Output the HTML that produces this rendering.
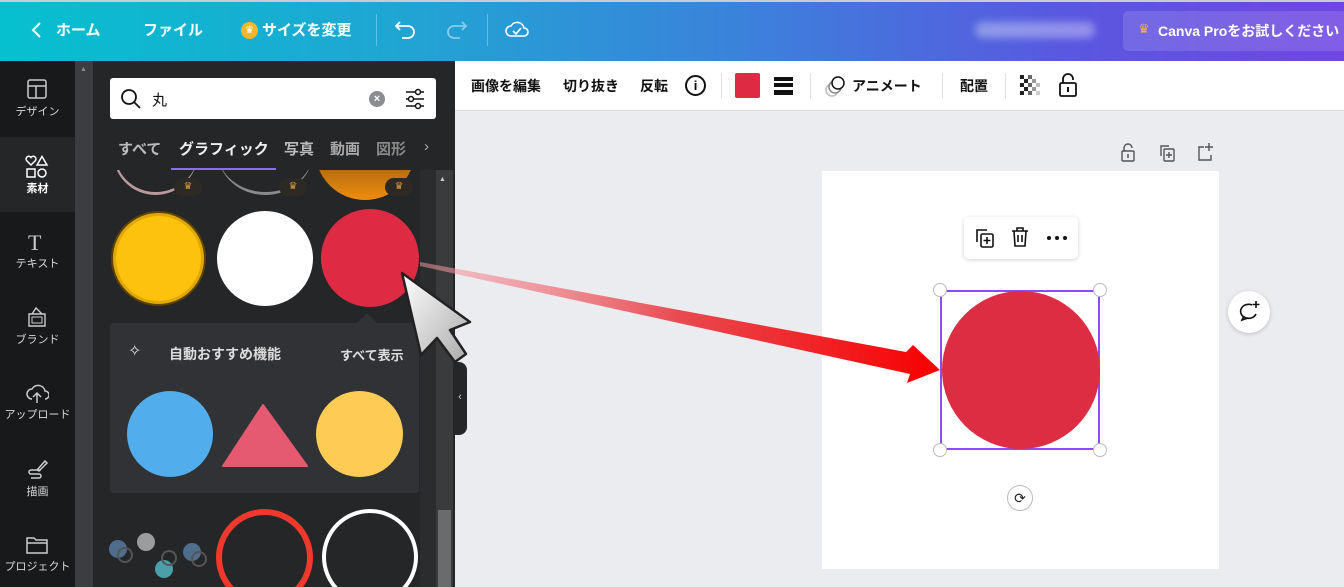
<!DOCTYPE html>
<html><head><meta charset="utf-8"><style>
*{margin:0;padding:0;box-sizing:border-box}
body{width:1344px;height:587px;overflow:hidden;position:relative;font-family:"Liberation Sans","Noto Sans CJK JP",sans-serif;background:#ebecf0}
.abs{position:absolute}
.top{left:0;top:0;width:1344px;height:61px;background:linear-gradient(90deg,#06c0cf 0%,#20a5d3 30%,#3b82db 55%,#5a57e0 80%,#7046e2 100%);border-top:2px solid #c9cdd3}
.tw{color:#fff;font-weight:bold;font-size:15px;top:19px}
.rail{left:0;top:61px;width:75px;height:526px;background:#18191b}
.ri{left:0;width:75px;text-align:center;color:#d8d9db;font-size:11px}
.sb{left:75px;top:61px;width:18px;height:526px;background:#3c3d40}
.panel{left:93px;top:61px;width:362px;height:526px;background:#252627}
.tool{left:455px;top:61px;width:889px;height:50px;background:#fff;border-bottom:1px solid #e0e0e0}
.tt{top:76px;font-size:14px;font-weight:bold;color:#111}
.sep{width:1px;height:26px;top:73px;background:#e0e1e3}
.cb{width:28px;height:18px;border-radius:9px;background:#2d2a26;color:#d99b3c;font-size:10px;text-align:center;line-height:18px}
</style></head><body>
<div class="abs top"></div>
<svg class="abs" style="left:30px;top:21px" width="14" height="18"><path d="M10 2 L3 9 L10 16" stroke="#fff" stroke-width="2" fill="none"/></svg>
<div class="abs tw" style="left:56px">ホーム</div>
<div class="abs tw" style="left:143px">ファイル</div>
<div class="abs" style="left:241px;top:22px;width:17px;height:17px;border-radius:50%;background:#f5b72a;color:#fff;font-size:10px;text-align:center;line-height:17px">♛</div>
<div class="abs tw" style="left:262px">サイズを変更</div>
<div class="abs" style="left:376px;top:14px;width:1px;height:32px;background:rgba(255,255,255,.3)"></div>
<svg class="abs" style="left:394px;top:18px" width="24" height="22"><path d="M6 4 L2 8 L6 12 M2 8 H14 a6 6 0 0 1 0 12 H8" stroke="#fff" stroke-width="1.8" fill="none"/></svg>
<svg class="abs" style="left:444px;top:18px" width="24" height="22"><path d="M18 4 L22 8 L18 12 M22 8 H10 a6 6 0 0 0 0 12 H16" stroke="rgba(255,255,255,.45)" stroke-width="1.8" fill="none"/></svg>
<div class="abs" style="left:487px;top:14px;width:1px;height:32px;background:rgba(255,255,255,.3)"></div>
<svg class="abs" style="left:504px;top:18px" width="26" height="22"><path d="M7 18 a5 5 0 0 1 0-10 a7 7 0 0 1 13 2 a4 4 0 0 1 0 8 Z M9 13 l3 3 l5-6" stroke="#fff" stroke-width="1.6" fill="none"/></svg>
<div class="abs" style="left:975px;top:22px;width:120px;height:16px;border-radius:8px;background:rgba(255,255,255,.35);filter:blur(4px)"></div>
<div class="abs" style="left:1123px;top:11px;width:230px;height:40px;border-radius:5px;background:rgba(255,255,255,.13)"></div>
<div class="abs" style="left:1138px;top:21px;color:#f5b72a;font-size:13px">♛</div>
<div class="abs tw" style="left:1158px;top:21px;font-size:14px;white-space:nowrap">Canva Proをお試しください</div>

<div class="abs rail"></div>
<div class="abs" style="left:0;top:137px;width:75px;height:75px;background:#252627"></div>
<svg class="abs" style="left:27px;top:79px" width="20" height="20"><rect x="1" y="1" width="18" height="18" rx="2" stroke="#ccc" stroke-width="1.5" fill="none"/><path d="M1 7 H19 M9 7 V19" stroke="#ccc" stroke-width="1.5"/></svg>
<div class="abs ri" style="top:103px">デザイン</div>
<svg class="abs" style="left:25px;top:155px" width="24" height="24"><path d="M6 10 L1.5 5.5 a2.5 2.5 0 0 1 4.5-3 a2.5 2.5 0 0 1 4.5 3Z M17 1.5 L22 10 H12Z" stroke="#fff" stroke-width="1.5" fill="none"/><rect x="2" y="14" width="8" height="8" stroke="#fff" stroke-width="1.5" fill="none"/><circle cx="17" cy="18" r="4" stroke="#fff" stroke-width="1.5" fill="none"/></svg>
<div class="abs ri" style="top:180px;color:#fff;font-weight:bold">素材</div>
<div class="abs" style="left:28px;top:230px;color:#ccc;font-size:22px;font-family:'Liberation Serif',serif">T</div>
<div class="abs ri" style="top:255px">テキスト</div>
<svg class="abs" style="left:26px;top:306px" width="22" height="22"><path d="M3 8 H19 V20 H3Z M6 8 L10 2 L16 8" stroke="#ccc" stroke-width="1.4" fill="none"/><rect x="6" y="11" width="10" height="6" stroke="#ccc" fill="none"/></svg>
<div class="abs ri" style="top:331px">ブランド</div>
<svg class="abs" style="left:25px;top:382px" width="24" height="22"><path d="M7 17 a5 5 0 0 1 0-10 a7 7 0 0 1 13 2 a4 4 0 0 1 0 8 M12 21 V11 M8 15 L12 11 L16 15" stroke="#ccc" stroke-width="1.5" fill="none"/></svg>
<div class="abs ri" style="top:406px">アップロード</div>
<svg class="abs" style="left:27px;top:458px" width="22" height="22"><path d="M10 12 L18 3 L20 5 L12 13Z M14 12 H4 a2 2 0 0 0 0 4 H12 a2 2 0 0 1 0 4 H4" stroke="#ccc" stroke-width="1.5" fill="none"/></svg>
<div class="abs ri" style="top:483px">描画</div>
<svg class="abs" style="left:26px;top:535px" width="22" height="20"><path d="M1 3 H8 L10 5 H21 V18 H1Z M1 8 H21" stroke="#ccc" stroke-width="1.5" fill="none"/></svg>
<div class="abs ri" style="top:558px">プロジェクト</div>

<div class="abs sb"></div>
<div class="abs" style="left:80px;top:66px;color:#888;font-size:7px">▲</div>
<div class="abs panel"></div>
<div class="abs" style="left:420px;top:170px;width:16px;height:417px;background:#2b2c2e"></div>
<div class="abs" style="left:436px;top:170px;width:17px;height:417px;background:#3a3b3d"></div>
<div class="abs" style="left:438px;top:510px;width:13px;height:77px;background:#6a6b6d"></div>
<div class="abs" style="left:439px;top:176px;color:#ccc;font-size:7px">▲</div>

<div class="abs" style="left:110px;top:78px;width:326px;height:41px;background:#fff;border-radius:3px"></div>
<svg class="abs" style="left:120px;top:88px" width="22" height="22"><circle cx="9" cy="9" r="7" stroke="#111" stroke-width="1.8" fill="none"/><path d="M14 14 L20 20" stroke="#111" stroke-width="1.8"/></svg>
<div class="abs" style="left:152px;top:89px;font-size:15px;color:#111">丸</div>
<div class="abs" style="left:369px;top:91px;width:16px;height:16px;border-radius:50%;background:#8c8d90;color:#fff;font-size:11px;text-align:center;line-height:16px;font-weight:bold">×</div>
<svg class="abs" style="left:404px;top:88px" width="22" height="22"><path d="M2 4 H20 M2 11 H20 M2 18 H20" stroke="#111" stroke-width="1.5"/><circle cx="14" cy="4" r="2.5" fill="#fff" stroke="#111" stroke-width="1.5"/><circle cx="7" cy="11" r="2.5" fill="#fff" stroke="#111" stroke-width="1.5"/><circle cx="14" cy="18" r="2.5" fill="#fff" stroke="#111" stroke-width="1.5"/></svg>

<div class="abs" style="left:118px;top:138px;font-size:15px;font-weight:bold;color:#bbb">すべて</div>
<div class="abs" style="left:179px;top:138px;font-size:15px;font-weight:bold;color:#eee">グラフィック</div>
<div class="abs" style="left:284px;top:138px;font-size:15px;font-weight:bold;color:#bbb">写真</div>
<div class="abs" style="left:330px;top:138px;font-size:15px;font-weight:bold;color:#aaa">動画</div>
<div class="abs" style="left:376px;top:138px;font-size:15px;font-weight:bold;color:#888">図形</div>
<div class="abs" style="left:424px;top:138px;font-size:15px;color:#aaa">›</div>
<div class="abs" style="left:171px;top:168px;width:105px;height:2px;background:#8b6fe6"></div>
<div class="abs" style="left:93px;top:170px;width:327px;height:30px;overflow:hidden">
 <div class="abs" style="left:20px;top:-60px;width:85px;height:85px;border-radius:50%;border-bottom:3px solid #b99a9e;border-left:2px solid #b99a9e"></div>
 <div class="abs" style="left:125px;top:-60px;width:95px;height:85px;border-radius:50%;border-bottom:3px solid #8a8b8d"></div>
 <div class="abs" style="left:222px;top:-70px;width:100px;height:100px;border-radius:50%;background:linear-gradient(#332a1a,#f08c0c)"></div>
 <div class="abs cb" style="left:81px;top:8px">♛</div>
 <div class="abs cb" style="left:186px;top:8px">♛</div>
 <div class="abs cb" style="left:292px;top:8px">♛</div>
</div>
<div class="abs" style="left:111px;top:211px;width:95px;height:95px;border-radius:50%;background:#fcc20e;border:2px solid #5a4400;box-shadow:inset 0 0 0 3px #e0a800"></div>
<div class="abs" style="left:217px;top:211px;width:96px;height:95px;border-radius:50%;background:#fff"></div>
<div class="abs" style="left:321px;top:209px;width:98px;height:98px;border-radius:50%;background:#de2b43"></div>

<div class="abs" style="left:110px;top:323px;width:309px;height:170px;background:#313235;border-radius:3px"></div>
<div class="abs" style="left:360px;top:316px;width:14px;height:14px;background:#313235;transform:rotate(45deg)"></div>
<div class="abs" style="left:128px;top:341px;color:#ddd;font-size:16px">✧</div>
<div class="abs" style="left:169px;top:344px;font-size:14px;font-weight:bold;color:#ddd">自動おすすめ機能</div>
<div class="abs" style="left:340px;top:345px;font-size:13px;font-weight:bold;color:#ddd">すべて表示</div>
<div class="abs" style="left:127px;top:391px;width:86px;height:86px;border-radius:50%;background:#52adec"></div>
<svg class="abs" style="left:222px;top:403px" width="86" height="64"><path d="M41 2 L85 63 H1Z" fill="#e55a70" stroke="#e55a70" stroke-linejoin="round" stroke-width="2"/></svg>
<div class="abs" style="left:316px;top:391px;width:87px;height:86px;border-radius:50%;background:#fecb55"></div>

<div class="abs" style="left:93px;top:505px;width:327px;height:82px;overflow:hidden">
 <div class="abs" style="left:16px;top:35px;width:18px;height:18px;border-radius:50%;background:#4f6d8c"></div>
 <div class="abs" style="left:24px;top:42px;width:16px;height:16px;border-radius:50%;border:2px solid #555"></div>
 <div class="abs" style="left:44px;top:28px;width:18px;height:18px;border-radius:50%;background:#9c9c9c"></div>
 <div class="abs" style="left:62px;top:55px;width:18px;height:18px;border-radius:50%;background:#4c9fa8"></div>
 <div class="abs" style="left:68px;top:45px;width:16px;height:16px;border-radius:50%;border:2px solid #555"></div>
 <div class="abs" style="left:90px;top:38px;width:18px;height:18px;border-radius:50%;background:#4f6d8c"></div>
 <div class="abs" style="left:98px;top:46px;width:16px;height:16px;border-radius:50%;border:2px solid #555"></div>
 <div class="abs" style="left:123px;top:4px;width:97px;height:97px;border-radius:50%;border:6px solid #f0382c"></div>
 <div class="abs" style="left:229px;top:4px;width:96px;height:96px;border-radius:50%;border:4px solid #fff"></div>
</div>
<div class="abs" style="left:453px;top:362px;width:14px;height:73px;background:#252627;border-radius:0 8px 8px 0;color:#ccc;font-size:11px;line-height:70px;text-align:center">‹</div>

<div class="abs tool"></div>
<div class="abs tt" style="left:471px">画像を編集</div>
<div class="abs tt" style="left:563px">切り抜き</div>
<div class="abs tt" style="left:640px">反転</div>
<div class="abs" style="left:685px;top:75px;width:21px;height:21px;border:2px solid #111;border-radius:50%;text-align:center;font-size:13px;line-height:17px;font-weight:bold">i</div>
<div class="abs sep" style="left:721px"></div>
<div class="abs" style="left:735px;top:73px;width:25px;height:25px;background:#de2b43;border-radius:2px"></div>
<div class="abs" style="left:774px;top:77px;width:19px;height:4px;background:#111"></div>
<div class="abs" style="left:774px;top:83px;width:19px;height:4px;background:#111"></div>
<div class="abs" style="left:774px;top:90px;width:19px;height:5px;background:#111"></div>
<div class="abs sep" style="left:810px"></div>
<svg class="abs" style="left:824px;top:74px" width="24" height="24"><circle cx="8" cy="16" r="6" stroke="#bbb" fill="none" stroke-width="1.5"/><circle cx="11" cy="13" r="6" stroke="#888" fill="#fff" stroke-width="1.5"/><circle cx="14" cy="9" r="6" stroke="#111" fill="#fff" stroke-width="1.5"/></svg>
<div class="abs tt" style="left:852px">アニメート</div>
<div class="abs sep" style="left:942px"></div>
<div class="abs tt" style="left:960px">配置</div>
<div class="abs sep" style="left:1005px"></div>
<svg class="abs" style="left:1020px;top:75px" width="22" height="22"><g fill="#222"><rect x="0" y="0" width="4" height="4"/><rect x="8" y="0" width="4" height="4" fill="#666"/><rect x="4" y="4" width="4" height="4"/><rect x="12" y="4" width="4" height="4" fill="#999"/><rect x="0" y="8" width="4" height="4"/><rect x="8" y="8" width="4" height="4" fill="#666"/><rect x="16" y="8" width="4" height="4" fill="#bbb"/><rect x="4" y="12" width="4" height="4"/><rect x="12" y="12" width="4" height="4" fill="#999"/><rect x="0" y="16" width="4" height="4"/><rect x="8" y="16" width="4" height="4" fill="#666"/><rect x="16" y="16" width="4" height="4" fill="#ccc"/></g></svg>
<svg class="abs" style="left:1058px;top:72px" width="20" height="26"><path d="M5 11 V7 a5 5 0 0 1 10 0 V8" stroke="#111" stroke-width="1.8" fill="none"/><rect x="2" y="11" width="16" height="13" rx="1.5" stroke="#111" stroke-width="1.8" fill="none"/><path d="M10 15 V20" stroke="#111" stroke-width="2"/></svg>

<svg class="abs" style="left:1120px;top:143px" width="18" height="20"><path d="M4 8 V5 a4 4 0 0 1 8 0" stroke="#555" stroke-width="1.4" fill="none"/><rect x="2" y="8" width="12" height="10" rx="1" stroke="#555" stroke-width="1.4" fill="none"/><path d="M8 11 V15" stroke="#555" stroke-width="1.5"/></svg>
<svg class="abs" style="left:1158px;top:143px" width="18" height="20"><path d="M3 13 V3 H11" stroke="#555" stroke-width="1.4" fill="none"/><rect x="6" y="6" width="10" height="12" rx="1" stroke="#555" stroke-width="1.4" fill="none"/><path d="M11 9 V15 M8 12 H14" stroke="#555" stroke-width="1.4"/></svg>
<svg class="abs" style="left:1196px;top:141px" width="20" height="22"><path d="M8 6 H3 V19 H15 V14 M13 2 V10 M9 6 H17" stroke="#555" stroke-width="1.4" fill="none"/></svg>

<div class="abs" style="left:822px;top:171px;width:397px;height:398px;background:#fff"></div>
<div class="abs" style="left:964px;top:217px;width:114px;height:42px;background:#fff;border-radius:5px;box-shadow:0 1px 4px rgba(0,0,0,.18)"></div>
<svg class="abs" style="left:974px;top:227px" width="22" height="22"><path d="M3 15 V3 H13" stroke="#111" stroke-width="1.6" fill="none"/><rect x="7" y="7" width="12" height="13" rx="1.5" stroke="#111" stroke-width="1.6" fill="none"/><path d="M13 10 V17 M9.5 13.5 H16.5" stroke="#111" stroke-width="1.6"/></svg>
<svg class="abs" style="left:1010px;top:226px" width="20" height="22"><path d="M2 5 H18 M7 5 V2 H13 V5 M4 5 L5 20 H15 L16 5 M8 9 V16 M12 9 V16" stroke="#111" stroke-width="1.6" fill="none"/></svg>
<div class="abs" style="left:1047px;top:236px;width:4px;height:4px;border-radius:50%;background:#111;box-shadow:8px 0 #111,16px 0 #111"></div>

<div class="abs" style="left:940px;top:290px;width:160px;height:160px;border:2px solid #8b4cf7"></div>
<div class="abs" style="left:942px;top:291px;width:158px;height:158px;border-radius:50%;background:#dc2d43"></div>
<div class="abs" style="left:933px;top:283px;width:14px;height:14px;border-radius:50%;background:#fff;border:1px solid #bbb"></div>
<div class="abs" style="left:1093px;top:283px;width:14px;height:14px;border-radius:50%;background:#fff;border:1px solid #bbb"></div>
<div class="abs" style="left:933px;top:443px;width:14px;height:14px;border-radius:50%;background:#fff;border:1px solid #bbb"></div>
<div class="abs" style="left:1093px;top:443px;width:14px;height:14px;border-radius:50%;background:#fff;border:1px solid #bbb"></div>
<div class="abs" style="left:1007px;top:485px;width:26px;height:26px;border-radius:50%;background:#fff;border:1px solid #bbb;text-align:center;line-height:24px;font-size:14px;color:#222">⟳</div>
<div class="abs" style="left:1228px;top:291px;width:42px;height:42px;border-radius:50%;background:#fff;box-shadow:0 1px 4px rgba(0,0,0,.2)"></div>
<svg class="abs" style="left:1237px;top:299px" width="26" height="26"><path d="M15 6 a8 7 0 1 0 4 9 M7 17 L5 21 L11 19" stroke="#111" stroke-width="1.6" fill="none"/><path d="M19 2 V9 M15.5 5.5 H22.5" stroke="#111" stroke-width="1.6"/></svg>

<svg class="abs" style="left:0;top:0" width="1344" height="587">
<defs><linearGradient id="ar" x1="420" y1="262" x2="940" y2="370" gradientUnits="userSpaceOnUse"><stop offset="0" stop-color="#f5a0a8" stop-opacity=".5"/><stop offset="0.5" stop-color="#e84a50"/><stop offset="1" stop-color="#f80000"/></linearGradient>
<linearGradient id="cu" x1="0" y1="0" x2="1" y2="1"><stop offset="0" stop-color="#fff"/><stop offset="1" stop-color="#aaa"/></linearGradient></defs>
<path d="M420 262 L906 352 L913 345 L940 370 L907 383 L910 374 L420 266Z" fill="url(#ar)"/>
<path d="M402 273 L421 355 L437 338 L455 362 L466 354 L450 330 L470 322Z" fill="url(#cu)" stroke="#222" stroke-width="2.5" stroke-linejoin="round"/>
</svg>
</body></html>
